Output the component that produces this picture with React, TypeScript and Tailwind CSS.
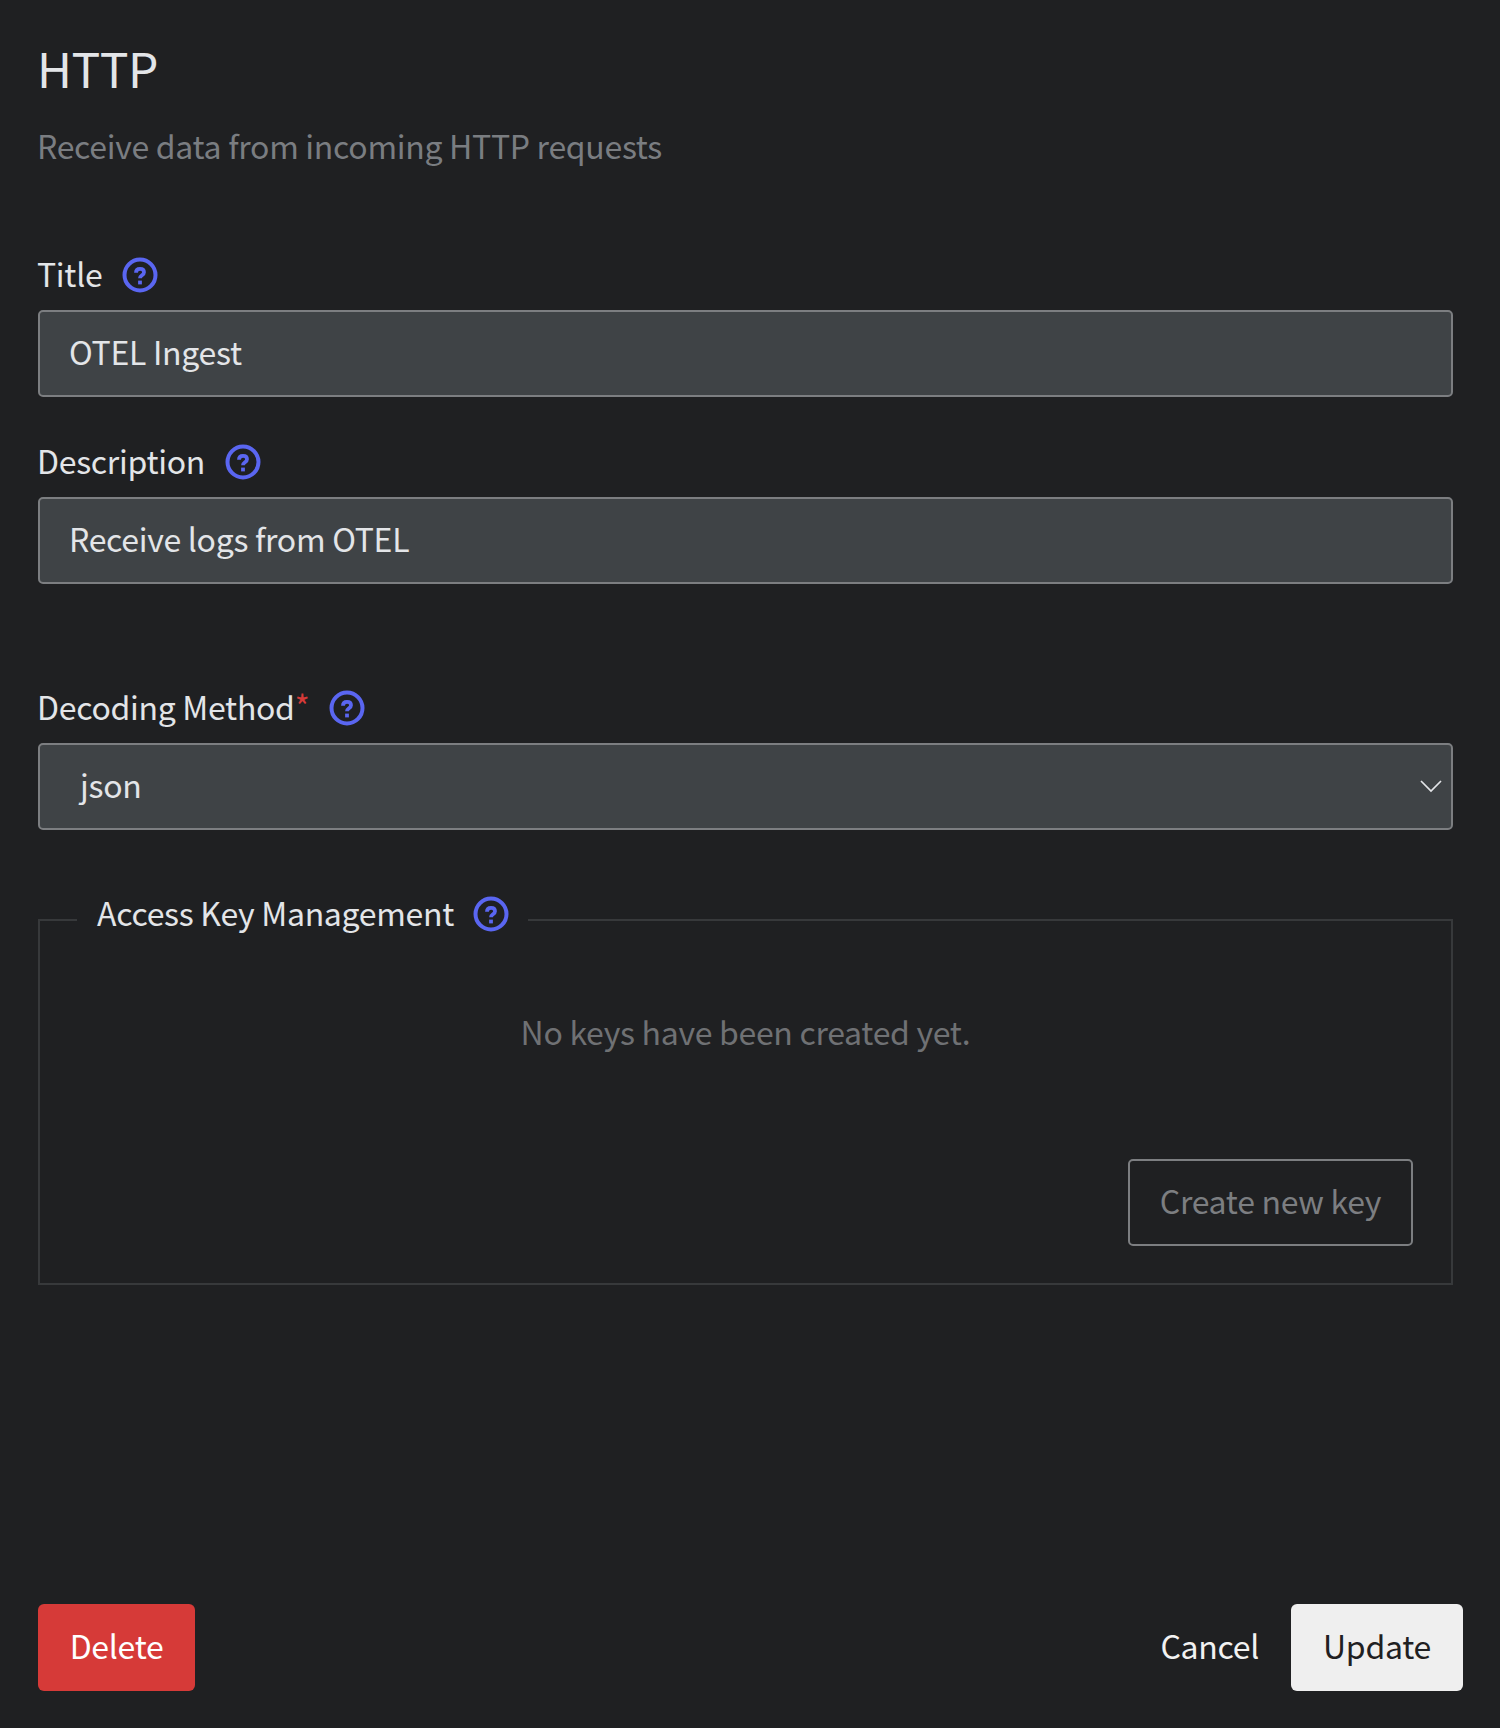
const HelpIcon = () => (
  <svg viewBox="0 0 36 36" className="w-[36px] h-[36px] shrink-0 fill-none stroke-[#5a66f1]">
    <circle cx="18" cy="18" r="15.5" strokeWidth="4" />
    <path d="M14 15.7c0-2.5 1.7-3.8 4-3.8s4 1.2 4 3.3c0 3.1-4 3-4 6" strokeWidth="3.8" />
    <path d="M16.1 23.6h3.8v3.8h-3.8z" className="fill-[#5a66f1] stroke-none" />
  </svg>
);

const Label = ({ text, required }: { text: string; required?: boolean }) => (
  <div className="flex items-center h-[42px] ml-[-1px] gap-[20px] text-[#e3e5e8]">
    <span className="pb-[4px]">
      {text}
      {required && <span className="text-[#d63a38] align-[1px] leading-[0]">*</span>}
    </span>
    <HelpIcon />
  </div>
);

const Field = ({ label, value }: { label: string; value: string }) => (
  <div className="flex flex-col">
    <Label text={label} />
    <div className="mt-[14px] h-[87px] flex items-center pb-[6px] pl-[29px] pr-[30px] bg-[#3f4346] border-2 border-[#7c7e81] rounded-[5px] text-[#e3e5e8]">
      {value}
    </div>
  </div>
);

const App = () => {
  return (
    <div className="h-[1728px] bg-[#1f2022] flex flex-col pl-[38px] pr-[37px] pt-[37px] pb-[37px] text-[32px] leading-[42px] tracking-[-0.3px] font-['Noto_Sans_CJK_JP',sans-serif]">
      <h1 className="ml-[-1px] text-[48px] leading-[60px] tracking-[-0.5px] text-[#e3e5e8]">HTTP</h1>
      <p className="ml-[-1px] mt-[27px] text-[#7a7d81]">Receive data from incoming HTTP requests</p>

      <div className="mt-[88px] flex flex-col gap-[44px] mr-[10px]">
        <Field label="Title" value="OTEL Ingest" />
        <Field label="Description" value="Receive logs from OTEL" />
      </div>

      <div className="mt-[103px] mr-[10px] flex flex-col">
        <Label text="Decoding Method" required />
        <div className="mt-[14px] h-[87px] flex items-center justify-between pb-[6px] pl-[40px] pr-[9px] bg-[#3f4346] border-2 border-[#7c7e81] rounded-[5px] text-[#e3e5e8]">
          json
          <svg viewBox="0 0 22 13" className="w-[22px] h-[13px] mt-[6px] fill-none stroke-[#e3e5e8] stroke-[1.7]">
            <path d="M1 1l10 10L21 1" />
          </svg>
        </div>
      </div>

      <fieldset className="mt-[63px] mr-[10px] h-[392px] border-2 border-[#37393b] px-[38px]">
        <legend className="flex items-start gap-[19px] ml-[-1px] pl-[20px] pr-[19px] h-[54px] text-[#e3e5e8]">
          <span className="mt-[-2px]">Access Key Management</span>
          <span className="mt-[3px]"><HelpIcon /></span>
        </legend>
        <p className="mt-[63px] text-center text-[#6f7174]">No keys have been created yet.</p>
        <div className="mt-[107px] flex justify-end">
          <button className="h-[87px] w-[285px] pb-[6px] border-2 border-[#7c7e81] rounded-[5px] text-[#7c7e81]">Create new key</button>
        </div>
      </fieldset>

      <div className="mt-auto flex items-center justify-between">
        <button className="h-[87px] w-[157px] pb-[6px] bg-[#d63a38] rounded-[6px] text-white">Delete</button>
        <div className="flex items-center gap-[32px]">
          <button className="pb-[6px] text-[#f2f2f2]">Cancel</button>
          <button className="h-[87px] w-[172px] pb-[6px] bg-[#efefef] rounded-[6px] text-[#1f2022]">Update</button>
        </div>
      </div>
    </div>
  );
};

export default App;
